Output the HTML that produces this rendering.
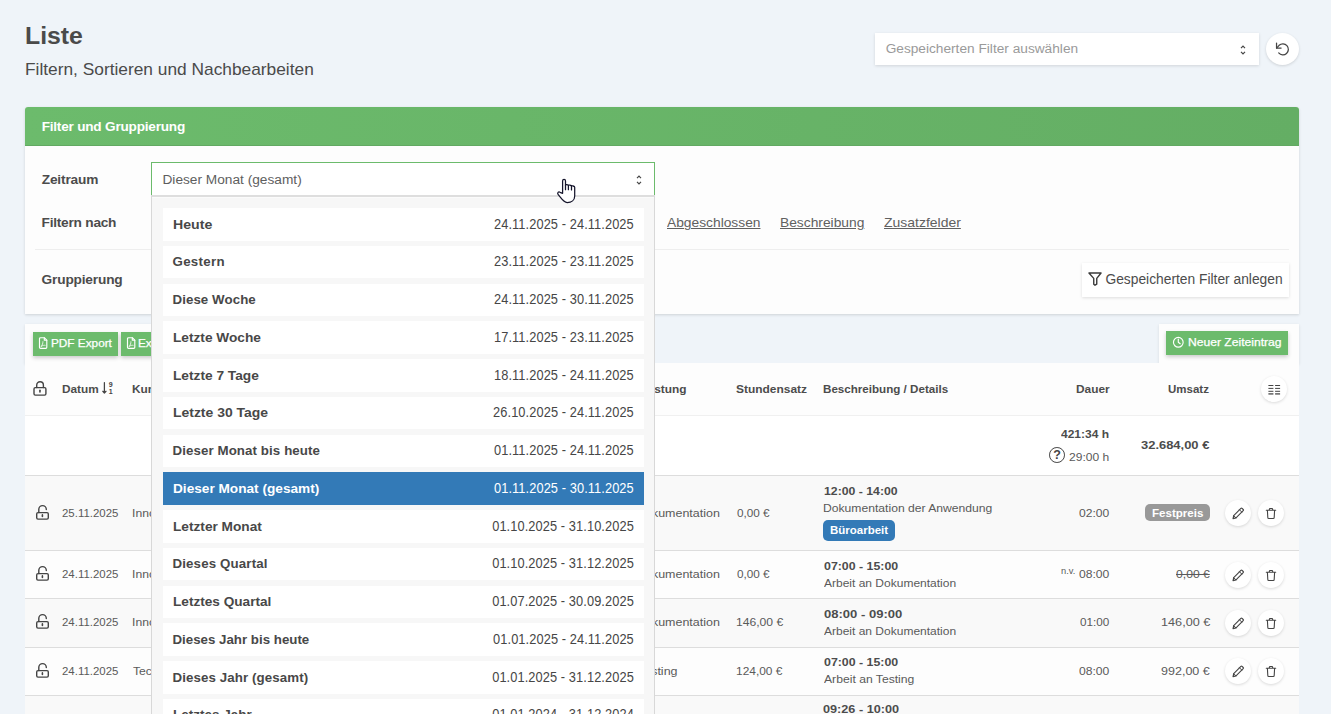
<!DOCTYPE html>
<html lang="de">
<head>
<meta charset="utf-8">
<title>Liste – Filtern, Sortieren und Nachbearbeiten</title>
<style>
*{box-sizing:border-box}
html,body{margin:0;padding:0}
body{width:1331px;height:714px;overflow:hidden;background:#eff4f9;color:#4a4a4a;
  font-family:"Liberation Sans",sans-serif;font-size:13px;position:relative}
div,section,header,h1,p,a,span,b{position:absolute;margin:0}
.t{line-height:16px;white-space:nowrap;font-weight:normal;transform-origin:0 50%}
.ic{position:absolute;display:block;overflow:visible}
.sh{background:#fff;box-shadow:0 1px 3px rgba(0,0,0,.13)}
.round{border-radius:50%;background:#fff;box-shadow:0 1px 3px rgba(0,0,0,.14)}
.card{background:#fdfdfd;border-radius:3px 3px 0 0;box-shadow:0 1px 3px rgba(0,0,0,.14)}
.card-h{left:0;top:0;width:100%;height:39px;border-radius:3px 3px 0 0;background:linear-gradient(90deg,#6cbb6c 0%,#64ae64 100%);
  border-bottom:1px solid #62a962}
.sel{border:1px solid #6cbb6c;border-bottom:0;background:#fff}
.sep{height:1px;background:#eee}
.tb{background:#fdfdfd;box-shadow:0 1px 3px rgba(0,0,0,.1)}
.btn-g{background:#6cbb6c;box-shadow:0 2px 4px rgba(0,0,0,.2)}
.tbl{background:#fdfdfd}
.row{left:0;width:1274px;border-bottom:1px solid #ddd}
.row.hd{border-bottom-color:#f0f0f0}
.row.alt{background:#f9f9f9}
.row.wh{background:#fff}
.badge{border-radius:5px}
.btn-g .t{-webkit-text-stroke:.250px #fff}
.q{border:1.600px solid #444;border-radius:50%;text-align:center;font-weight:bold;color:#444;font-size:12.500px;line-height:14.200px}
.dd{background:#f7f7f7;border:1px solid #d8d8d8;border-top:2px solid #dedede;box-shadow:inset 0 1px 0 #fbfbfb}
.it{left:11px;width:481px;background:#fff;color:#464646}
.it .d{right:9.800px;font-size:14px;line-height:16px;letter-spacing:.1px;transform:scaleX(.915);transform-origin:100% 50%;white-space:nowrap}
.it.on{background:#337ab7;color:#fff}
</style>
</head>
<body>
<header style="left:0;top:0;width:1331px;height:100px">
  <h1 class="t" style="left:24.84px;top:28.4px;font-size:24.2px;font-weight:bold;color:#4a4a4a;transform:scaleX(1.026)">Liste</h1>
  <p class="t" style="left:24.63px;top:61px;font-size:16.1px;color:#4a4a4a;transform:scaleX(1.076)">Filtern, Sortieren und Nachbearbeiten</p>
  <div class="sh" style="left:875px;top:33px;width:384px;height:32px">
    <span class="t" style="left:10.64px;top:8.4px;font-size:13.7px;color:#9a9a9a">Gespeicherten Filter auswählen</span>
    <svg class="ic" style="left:363.5px;top:10.5px" width="8" height="12" viewBox="0 0 8 12" fill="none" stroke="#444" stroke-width="1.200"><path d="M2 4.100 4 2.100l2 2M2 7.900 4 9.900l2-2"/></svg>
  </div>
  <div class="round" style="left:1266px;top:33px;width:33px;height:32px"><svg class="ic" style="left:7.7px;top:7.2px" width="18" height="18" viewBox="-9 -9 18 18" fill="none" stroke="#444" stroke-width="1.250" stroke-linecap="round" stroke-linejoin="round"><path d="M-1.900-.900H-6.450V-5.900"/><path d="M-6.450-.900-3.900-3.700A5.500 5.500 0 1 1-4.300 3.900"/></svg></div>
</header>

<section class="card" style="left:25px;top:107px;width:1274px;height:207px">
  <div class="card-h"><span class="t" style="left:16.65px;top:11.7px;font-size:13.6px;font-weight:bold;color:#fff;letter-spacing:-0.21px">Filter und Gruppierung</span></div>
  <span class="t" style="left:16.68px;top:65px;font-size:13.7px;font-weight:bold;color:#4c4c4c;letter-spacing:-0.15px">Zeitraum</span>
  <span class="t" style="left:16.55px;top:108px;font-size:13.7px;font-weight:bold;color:#4c4c4c;letter-spacing:-0.24px">Filtern nach</span>
  <span class="t" style="left:16.6px;top:165px;font-size:13.7px;font-weight:bold;color:#4c4c4c;letter-spacing:-0.18px">Gruppierung</span>
  <div class="sel" style="left:126px;top:55px;width:504px;height:34px"><span class="t" style="left:10.49px;top:9.4px;font-size:13.7px;color:#5e5e5e">Dieser Monat (gesamt)</span><svg class="ic" style="left:482.5px;top:10.6px" width="8" height="12" viewBox="0 0 8 12" fill="none" stroke="#444" stroke-width="1.200"><path d="M2 4.100 4 2.100l2 2M2 7.900 4 9.900l2-2"/></svg></div>
  <a class="t" style="left:641.83px;top:108.2px;font-size:13.2px;color:#606060;transform:scaleX(1.045);text-decoration:underline">Abgeschlossen</a>
  <a class="t" style="left:754.86px;top:108.2px;font-size:13.2px;color:#606060;transform:scaleX(1.046);text-decoration:underline">Beschreibung</a>
  <a class="t" style="left:858.75px;top:108.2px;font-size:13.2px;color:#606060;transform:scaleX(1.059);text-decoration:underline">Zusatzfelder</a>
  <div class="sep" style="left:10px;top:142px;width:1254px"></div>
  <div class="sh" style="left:1057px;top:156px;width:207px;height:34px"><svg class="ic" style="left:5px;top:8px" width="16" height="16" viewBox="0 0 16 16" fill="none" stroke="#3a3a3a" stroke-width="1.400" stroke-linejoin="round"><path d="M1.950 2H14.050L9.750 7.400V13.200L8 14.200 6.750 13.200V7.400Z"/></svg><span class="t" style="left:23.45px;top:9px;font-size:13.8px;color:#4c4c4c">Gespeicherten Filter anlegen</span></div>
</section>

<div class="tb" style="left:25px;top:323.5px;width:420px;height:40px">
  <div class="btn-g" style="left:8px;top:8.5px;width:85px;height:24px"><svg class="ic" style="left:5px;top:4px" width="10" height="14" viewBox="0 0 10 14" fill="none" stroke="#fff" stroke-width="1.150" stroke-linecap="round" stroke-linejoin="round"><path d="M1.500 2.700a1 1 0 0 1 1-1H6.300L8.800 4.200V11.350a1 1 0 0 1-1 1H2.500a1 1 0 0 1-1-1Z"/><path d="M6.300 1.700V4.200H8.800"/><path d="M3.300 10.300C4.500 8.800 4.900 7.300 4.900 5.700M3.300 10.300C4.800 9.300 6 9.100 7.100 9.300" stroke-width=".8"/></svg><span class="t" style="left:17.99px;top:3px;font-size:11.1px;color:#fff;transform:scaleX(1.062)">PDF Export</span></div>
  <div class="btn-g" style="left:96px;top:8.5px;width:92px;height:24px"><svg class="ic" style="left:5px;top:4px" width="10" height="14" viewBox="0 0 10 14" fill="none" stroke="#fff" stroke-width="1.150" stroke-linecap="round" stroke-linejoin="round"><path d="M1.500 2.700a1 1 0 0 1 1-1H6.300L8.800 4.200V11.350a1 1 0 0 1-1 1H2.500a1 1 0 0 1-1-1Z"/><path d="M6.300 1.700V4.200H8.800"/><path d="M3.300 10.300C4.500 8.800 4.900 7.300 4.900 5.700M3.300 10.300C4.800 9.300 6 9.100 7.100 9.300" stroke-width=".8"/></svg><span class="t" style="left:17.19px;top:3px;font-size:11.1px;color:#fff;transform:scaleX(1.06)">Excel Export</span></div>
</div>
<div class="tb" style="left:1159px;top:323.5px;width:140px;height:40px">
  <div class="btn-g" style="left:7px;top:7.5px;width:122px;height:24px"><svg class="ic" style="left:6px;top:4.5px" width="12.6" height="12.6" viewBox="0 0 12.6 12.6" fill="none" stroke="#fff" stroke-width="1.150" stroke-linecap="round" stroke-linejoin="round"><circle cx="6.300" cy="6.300" r="4.850"/><path d="M6.300 3.100V6.300L8.200 7.700"/></svg><span class="t" style="left:21.55px;top:3px;font-size:11.1px;color:#fff;transform:scaleX(1.091)">Neuer Zeiteintrag</span></div>
</div>

<div class="tbl" style="left:25px;top:363px;width:1274px;height:351px">
  <div class="row hd" style="top:0;height:53px">
    <svg class="ic" style="left:7px;top:17px" width="16" height="17" viewBox="0 0 16 17" fill="none" stroke="#444" stroke-width="1.400" stroke-linecap="round" stroke-linejoin="round"><rect x="2" y="7.600" width="11.900" height="7.500" rx="1.300"/><path d="M4.700 7.600V5.150a3.350 3.350 0 0 1 6.700 0V7.600"/><path d="M7.950 10.300V12" stroke-width="1.600"/></svg>
    <span class="t" style="left:36.51px;top:18.2px;font-size:11px;font-weight:bold;color:#4c4c4c;transform:scaleX(1.073)">Datum</span><svg class="ic" style="left:75px;top:17px" width="14" height="16" viewBox="0 0 14 16" fill="none" stroke="#444" stroke-linecap="round" stroke-linejoin="round"><path d="M4.400 2.600V13M2.800 11.300 4.400 13 6 11.300" stroke-width="1.250"/><text x="8.800" y="7.300" font-family="Liberation Sans, sans-serif" font-size="7" font-weight="bold" fill="#444" stroke="none">9</text><text x="8.800" y="13.600" font-family="Liberation Sans, sans-serif" font-size="7" font-weight="bold" fill="#444" stroke="none">1</text></svg>
    <span class="t" style="left:106.61px;top:18.2px;font-size:11px;font-weight:bold;color:#4c4c4c;transform:scaleX(1.08)">Kunde</span>
    <span class="t" style="left:333.91px;top:18.2px;font-size:11px;font-weight:bold;color:#4c4c4c;transform:scaleX(1.08)">Projekt</span>
    <span class="t" style="left:612.45px;top:18.2px;font-size:11px;font-weight:bold;color:#4c4c4c;transform:scaleX(1.08)">Leistung</span>
    <span class="t" style="left:711.01px;top:18.2px;font-size:11px;font-weight:bold;color:#4c4c4c;transform:scaleX(1.086)">Stundensatz</span>
    <span class="t" style="left:798.03px;top:18.2px;font-size:11px;font-weight:bold;color:#4c4c4c;transform:scaleX(1.055)">Beschreibung / Details</span>
    <span class="t" style="left:1051.11px;top:18.2px;font-size:11px;font-weight:bold;color:#4c4c4c;transform:scaleX(1.079)">Dauer</span>
    <span class="t" style="left:1142.84px;top:18.2px;font-size:11px;font-weight:bold;color:#4c4c4c;transform:scaleX(1.046)">Umsatz</span>
    <div class="round" style="left:1235.8px;top:13px;width:26.2px;height:26.2px"><svg class="ic" style="left:4.1px;top:4.1px" width="18" height="18" viewBox="-9 -9 18 18" fill="none" stroke="#444"><path d="M-5.600-3.500h5M1.100-3.500h5M-5.600-.600h5M1.100-.600h5M-5.600 2.300h5M1.100 2.300h5" stroke-width="1" stroke-linecap="butt"/><path d="M-5.600 4.900h5M1.100 4.900h5" stroke-width="1.700" stroke="#777" stroke-linecap="butt"/></svg></div>
  </div>
  <div class="row wh" style="top:53px;height:60px">
    <span class="t" style="left:1036.26px;top:10.7px;font-size:10.4px;font-weight:bold;color:#4c4c4c;transform:scaleX(1.157)">421:34 h</span>
    <div class="q" style="left:1024.2px;top:31.1px;width:15.8px;height:15.8px">?</div><span class="t" style="left:1043.57px;top:34px;font-size:10.4px;color:#5a5a5a;transform:scaleX(1.16)">29:00 h</span>
    <span class="t" style="left:1116.15px;top:22px;font-size:10.4px;font-weight:bold;color:#4c4c4c;transform:scaleX(1.245)">32.684,00 €</span>
  </div>
  <div class="row alt" style="top:113px;height:75px">
    <svg class="ic" style="left:10px;top:27.2px" width="15" height="17" viewBox="0 0 15 17" fill="none" stroke="#444" stroke-width="1.400" stroke-linecap="round" stroke-linejoin="round"><rect x="1.700" y="9.600" width="11.600" height="6.500" rx="1.300"/><path d="M3.800 9.600V6.350a3.750 3.750 0 0 1 7.500 0V6.500"/><path d="M7.400 11.900V13.500" stroke-width="1.600"/></svg>
    <span class="t" style="left:36.78px;top:30px;font-size:10.4px;color:#5a5a5a;transform:scaleX(1.1)">25.11.2025</span>
    <span class="t" style="left:107.06px;top:30px;font-size:10.4px;color:#5a5a5a;transform:scaleX(1.17)">Innovative Solutions GmbH</span>
    <span class="t" style="left:333.77px;top:30px;font-size:10.4px;color:#5a5a5a;transform:scaleX(1.17)">Kundenportal Relaunch</span>
    <span class="t" style="left:611.19px;top:30px;font-size:10.4px;color:#5a5a5a;transform:scaleX(1.2)">Dokumentation</span>
    <span class="t" style="left:711.71px;top:30px;font-size:10.4px;color:#5a5a5a;transform:scaleX(1.13)">0,00 €</span>
    <span class="t" style="left:798.81px;top:8.2px;font-size:10.4px;font-weight:bold;color:#4c4c4c;transform:scaleX(1.18)">12:00 - 14:00</span>
    <span class="t" style="left:797.56px;top:25px;font-size:10.4px;color:#5a5a5a;transform:scaleX(1.168)">Dokumentation der Anwendung</span>
    <span class="badge" style="left:798.1px;top:44px;width:71.9px;height:21.1px;background:#337ab7"><span class="t" style="left:6.86px;top:1.6px;font-size:11.2px;font-weight:bold;color:#fff;transform:scaleX(1.026)">Büroarbeit</span></span>
    <span class="t" style="left:1053.51px;top:30px;font-size:10.4px;color:#5a5a5a;transform:scaleX(1.163)">02:00</span>
    <span class="badge" style="left:1120.2px;top:28px;width:64.9px;height:17px;background:#999"><span class="t" style="left:6.65px;top:1.3px;font-size:11.2px;font-weight:bold;color:#fff;transform:scaleX(1.034)">Festpreis</span></span>
    <div class="round" style="left:1200px;top:24.1px;width:26px;height:26px"><svg class="ic" style="left:4px;top:4px" width="18" height="18" viewBox="-9 -9 18 18" fill="none" stroke="#444" stroke-width="1.100" stroke-linecap="round" stroke-linejoin="round"><path d="M-5 5.600l.700-3L2.900-4.600q.600-.600 1.200 0L5.200-3.500q.600.600 0 1.200L-2 4.900Z"/><path d="M1.500-3.200 3.800-.900M-4.300 2.600-2 4.900" stroke-width="1"/></svg></div>
    <div class="round" style="left:1233px;top:24.1px;width:26px;height:26px"><svg class="ic" style="left:4px;top:4px" width="18" height="18" viewBox="-9 -9 18 18" fill="none" stroke="#444" stroke-width="1.100" stroke-linecap="round" stroke-linejoin="round"><path d="M-4.700-2.700H4.700M-1.700-2.700V-3.600a.900.900 0 0 1 .900-.900h1.600a.900.900 0 0 1 .900.900V-2.700M-3.600-2.700l.400 7.200a1 1 0 0 0 1 1h4.400a1 1 0 0 0 1-1l.400-7.200"/></svg></div>
  </div>
  <div class="row " style="top:188px;height:48px">
    <svg class="ic" style="left:10px;top:13px" width="15" height="17" viewBox="0 0 15 17" fill="none" stroke="#444" stroke-width="1.400" stroke-linecap="round" stroke-linejoin="round"><rect x="1.700" y="9.600" width="11.600" height="6.500" rx="1.300"/><path d="M3.800 9.600V6.350a3.750 3.750 0 0 1 7.500 0V6.500"/><path d="M7.400 11.900V13.500" stroke-width="1.600"/></svg>
    <span class="t" style="left:36.78px;top:15.8px;font-size:10.4px;color:#5a5a5a;transform:scaleX(1.1)">24.11.2025</span>
    <span class="t" style="left:107.06px;top:15.8px;font-size:10.4px;color:#5a5a5a;transform:scaleX(1.17)">Innovative Solutions GmbH</span>
    <span class="t" style="left:333.77px;top:15.8px;font-size:10.4px;color:#5a5a5a;transform:scaleX(1.17)">Kundenportal Relaunch</span>
    <span class="t" style="left:611.19px;top:15.8px;font-size:10.4px;color:#5a5a5a;transform:scaleX(1.2)">Dokumentation</span>
    <span class="t" style="left:711.71px;top:15.8px;font-size:10.4px;color:#5a5a5a;transform:scaleX(1.13)">0,00 €</span>
    <span class="t" style="left:799.02px;top:8.1px;font-size:10.4px;font-weight:bold;color:#4c4c4c;transform:scaleX(1.19)">07:00 - 15:00</span>
    <span class="t" style="left:798.61px;top:24.8px;font-size:10.4px;color:#5a5a5a;transform:scaleX(1.155)">Arbeit an Dokumentation</span>
    <span class="t" style="left:1035.72px;top:11.9px;font-size:9px;color:#5a5a5a;transform:scaleX(1.03)">n.v.</span>
    <span class="t" style="left:1054.1px;top:15.8px;font-size:10.4px;color:#5a5a5a;transform:scaleX(1.167)">08:00</span>
    <span class="t" style="left:1150.9px;top:15.8px;font-size:10.4px;color:#5a5a5a;transform:scaleX(1.169);text-decoration:line-through">0,00 €</span>
    <div class="round" style="left:1200px;top:10.85px;width:26px;height:26px"><svg class="ic" style="left:4px;top:4px" width="18" height="18" viewBox="-9 -9 18 18" fill="none" stroke="#444" stroke-width="1.100" stroke-linecap="round" stroke-linejoin="round"><path d="M-5 5.600l.700-3L2.900-4.600q.600-.600 1.200 0L5.200-3.500q.600.600 0 1.200L-2 4.900Z"/><path d="M1.500-3.200 3.800-.900M-4.300 2.600-2 4.900" stroke-width="1"/></svg></div>
    <div class="round" style="left:1233px;top:10.85px;width:26px;height:26px"><svg class="ic" style="left:4px;top:4px" width="18" height="18" viewBox="-9 -9 18 18" fill="none" stroke="#444" stroke-width="1.100" stroke-linecap="round" stroke-linejoin="round"><path d="M-4.700-2.700H4.700M-1.700-2.700V-3.600a.900.900 0 0 1 .900-.900h1.600a.900.900 0 0 1 .900.900V-2.700M-3.600-2.700l.400 7.200a1 1 0 0 0 1 1h4.400a1 1 0 0 0 1-1l.400-7.200"/></svg></div>
  </div>
  <div class="row alt" style="top:236px;height:49px">
    <svg class="ic" style="left:10px;top:13.2px" width="15" height="17" viewBox="0 0 15 17" fill="none" stroke="#444" stroke-width="1.400" stroke-linecap="round" stroke-linejoin="round"><rect x="1.700" y="9.600" width="11.600" height="6.500" rx="1.300"/><path d="M3.800 9.600V6.350a3.750 3.750 0 0 1 7.500 0V6.500"/><path d="M7.400 11.900V13.500" stroke-width="1.600"/></svg>
    <span class="t" style="left:36.78px;top:16px;font-size:10.4px;color:#5a5a5a;transform:scaleX(1.1)">24.11.2025</span>
    <span class="t" style="left:107.06px;top:16px;font-size:10.4px;color:#5a5a5a;transform:scaleX(1.17)">Innovative Solutions GmbH</span>
    <span class="t" style="left:333.77px;top:16px;font-size:10.4px;color:#5a5a5a;transform:scaleX(1.17)">Kundenportal Relaunch</span>
    <span class="t" style="left:611.19px;top:16px;font-size:10.4px;color:#5a5a5a;transform:scaleX(1.2)">Dokumentation</span>
    <span class="t" style="left:710.67px;top:16px;font-size:10.4px;color:#5a5a5a;transform:scaleX(1.168)">146,00 €</span>
    <span class="t" style="left:799px;top:7.9px;font-size:10.4px;font-weight:bold;color:#4c4c4c;transform:scaleX(1.255)">08:00 - 09:00</span>
    <span class="t" style="left:798.61px;top:24.9px;font-size:10.4px;color:#5a5a5a;transform:scaleX(1.155)">Arbeit an Dokumentation</span>
    <span class="t" style="left:1055.21px;top:16px;font-size:10.4px;color:#5a5a5a;transform:scaleX(1.127)">01:00</span>
    <span class="t" style="left:1135.91px;top:16px;font-size:10.4px;color:#5a5a5a;transform:scaleX(1.221)">146,00 €</span>
    <div class="round" style="left:1200px;top:10.9px;width:26px;height:26px"><svg class="ic" style="left:4px;top:4px" width="18" height="18" viewBox="-9 -9 18 18" fill="none" stroke="#444" stroke-width="1.100" stroke-linecap="round" stroke-linejoin="round"><path d="M-5 5.600l.700-3L2.900-4.600q.600-.600 1.200 0L5.200-3.500q.600.600 0 1.200L-2 4.900Z"/><path d="M1.500-3.200 3.800-.900M-4.300 2.600-2 4.900" stroke-width="1"/></svg></div>
    <div class="round" style="left:1233px;top:10.9px;width:26px;height:26px"><svg class="ic" style="left:4px;top:4px" width="18" height="18" viewBox="-9 -9 18 18" fill="none" stroke="#444" stroke-width="1.100" stroke-linecap="round" stroke-linejoin="round"><path d="M-4.700-2.700H4.700M-1.700-2.700V-3.600a.900.900 0 0 1 .900-.900h1.600a.900.900 0 0 1 .900.900V-2.700M-3.600-2.700l.400 7.200a1 1 0 0 0 1 1h4.400a1 1 0 0 0 1-1l.400-7.200"/></svg></div>
  </div>
  <div class="row " style="top:285px;height:48px">
    <svg class="ic" style="left:10px;top:12.9px" width="15" height="17" viewBox="0 0 15 17" fill="none" stroke="#444" stroke-width="1.400" stroke-linecap="round" stroke-linejoin="round"><rect x="1.700" y="9.600" width="11.600" height="6.500" rx="1.300"/><path d="M3.800 9.600V6.350a3.750 3.750 0 0 1 7.500 0V6.500"/><path d="M7.400 11.900V13.500" stroke-width="1.600"/></svg>
    <span class="t" style="left:36.78px;top:15.7px;font-size:10.4px;color:#5a5a5a;transform:scaleX(1.1)">24.11.2025</span>
    <span class="t" style="left:108.13px;top:15.7px;font-size:10.4px;color:#5a5a5a;transform:scaleX(1.17)">TechStart AG</span>
    <span class="t" style="left:333.76px;top:15.7px;font-size:10.4px;color:#5a5a5a;transform:scaleX(1.17)">Mobile App</span>
    <span class="t" style="left:612.85px;top:15.7px;font-size:10.4px;color:#5a5a5a;transform:scaleX(1.2)">Testing</span>
    <span class="t" style="left:710.7px;top:15.7px;font-size:10.4px;color:#5a5a5a;transform:scaleX(1.147)">124,00 €</span>
    <span class="t" style="left:799.02px;top:7px;font-size:10.4px;font-weight:bold;color:#4c4c4c;transform:scaleX(1.19)">07:00 - 15:00</span>
    <span class="t" style="left:798.61px;top:23.8px;font-size:10.4px;color:#5a5a5a;transform:scaleX(1.17)">Arbeit an Testing</span>
    <span class="t" style="left:1054.1px;top:15.7px;font-size:10.4px;color:#5a5a5a;transform:scaleX(1.167)">08:00</span>
    <span class="t" style="left:1135.75px;top:15.7px;font-size:10.4px;color:#5a5a5a;transform:scaleX(1.206)">992,00 €</span>
    <div class="round" style="left:1200px;top:10.1px;width:26px;height:26px"><svg class="ic" style="left:4px;top:4px" width="18" height="18" viewBox="-9 -9 18 18" fill="none" stroke="#444" stroke-width="1.100" stroke-linecap="round" stroke-linejoin="round"><path d="M-5 5.600l.700-3L2.900-4.600q.600-.600 1.200 0L5.200-3.500q.600.600 0 1.200L-2 4.900Z"/><path d="M1.500-3.200 3.800-.900M-4.300 2.600-2 4.900" stroke-width="1"/></svg></div>
    <div class="round" style="left:1233px;top:10.1px;width:26px;height:26px"><svg class="ic" style="left:4px;top:4px" width="18" height="18" viewBox="-9 -9 18 18" fill="none" stroke="#444" stroke-width="1.100" stroke-linecap="round" stroke-linejoin="round"><path d="M-4.700-2.700H4.700M-1.700-2.700V-3.600a.900.900 0 0 1 .900-.900h1.600a.900.900 0 0 1 .900.900V-2.700M-3.600-2.700l.400 7.200a1 1 0 0 0 1 1h4.400a1 1 0 0 0 1-1l.400-7.200"/></svg></div>
  </div>
  <div class="row alt" style="top:333px;height:75px">
    <span class="t" style="left:798.11px;top:6.1px;font-size:10.4px;font-weight:bold;color:#4c4c4c;transform:scaleX(1.219)">09:26 - 10:00</span>
  </div>
</div>

<div class="dd" style="left:151px;top:195px;width:504px;height:530px">
  <div class="it" style="top:11px;height:33px"><b class="t" style="left:9.5px;top:9px;font-size:13.3px;font-weight:bold;color:#484848;transform:scaleX(1.062)">Heute</b><span class="d" style="top:8px">24.11.2025 - 24.11.2025</span></div>
  <div class="it" style="top:49px;height:32px"><b class="t" style="left:9.5px;top:8px;font-size:13.3px;font-weight:bold;color:#484848;letter-spacing:0.31px">Gestern</b><span class="d" style="top:7px">23.11.2025 - 23.11.2025</span></div>
  <div class="it" style="top:87px;height:32px"><b class="t" style="left:9.5px;top:8px;font-size:13.3px;font-weight:bold;color:#484848;letter-spacing:0.07px">Diese Woche</b><span class="d" style="top:7px">24.11.2025 - 30.11.2025</span></div>
  <div class="it" style="top:124px;height:33px"><b class="t" style="left:9.5px;top:9px;font-size:13.3px;font-weight:bold;color:#484848;transform:scaleX(1.029)">Letzte Woche</b><span class="d" style="top:8px">17.11.2025 - 23.11.2025</span></div>
  <div class="it" style="top:162px;height:33px"><b class="t" style="left:9.5px;top:9px;font-size:13.3px;font-weight:bold;color:#484848;transform:scaleX(1.031)">Letzte 7 Tage</b><span class="d" style="top:8px">18.11.2025 - 24.11.2025</span></div>
  <div class="it" style="top:200px;height:32px"><b class="t" style="left:9.5px;top:8px;font-size:13.3px;font-weight:bold;color:#484848;transform:scaleX(1.048)">Letzte 30 Tage</b><span class="d" style="top:7px">26.10.2025 - 24.11.2025</span></div>
  <div class="it" style="top:238px;height:32px"><b class="t" style="left:9.5px;top:8px;font-size:13.3px;font-weight:bold;color:#484848;letter-spacing:0.09px">Dieser Monat bis heute</b><span class="d" style="top:7px">01.11.2025 - 24.11.2025</span></div>
  <div class="it on" style="top:275px;height:33px"><b class="t" style="left:9.5px;top:9px;font-size:13.3px;font-weight:bold;color:#fff;transform:scaleX(1.026)">Dieser Monat (gesamt)</b><span class="d" style="top:8px">01.11.2025 - 30.11.2025</span></div>
  <div class="it" style="top:313px;height:33px"><b class="t" style="left:9.5px;top:9px;font-size:13.3px;font-weight:bold;color:#484848;transform:scaleX(1.028)">Letzter Monat</b><span class="d" style="top:8px">01.10.2025 - 31.10.2025</span></div>
  <div class="it" style="top:351px;height:32px"><b class="t" style="left:9.5px;top:8px;font-size:13.3px;font-weight:bold;color:#484848;letter-spacing:0.14px">Dieses Quartal</b><span class="d" style="top:7px">01.10.2025 - 31.12.2025</span></div>
  <div class="it" style="top:389px;height:32px"><b class="t" style="left:9.5px;top:8px;font-size:13.3px;font-weight:bold;color:#484848;transform:scaleX(1.024)">Letztes Quartal</b><span class="d" style="top:7px">01.07.2025 - 30.09.2025</span></div>
  <div class="it" style="top:426px;height:33px"><b class="t" style="left:9.5px;top:9px;font-size:13.3px;font-weight:bold;color:#484848">Dieses Jahr bis heute</b><span class="d" style="top:8px">01.01.2025 - 24.11.2025</span></div>
  <div class="it" style="top:464px;height:33px"><b class="t" style="left:9.5px;top:9px;font-size:13.3px;font-weight:bold;color:#484848;letter-spacing:0.1px">Dieses Jahr (gesamt)</b><span class="d" style="top:8px">01.01.2025 - 31.12.2025</span></div>
  <div class="it" style="top:502px;height:32px"><b class="t" style="left:9.5px;top:8px;font-size:13.3px;font-weight:bold;color:#484848;transform:scaleX(1.016)">Letztes Jahr</b><span class="d" style="top:7px">01.01.2024 - 31.12.2024</span></div>
</div>

<svg class="ic" style="left:545px;top:170px" width="50" height="36" viewBox="0 0 50 36" fill="none" stroke="#15152b" stroke-width="1.250" stroke-linecap="round" stroke-linejoin="round"><path d="M17.600 23.300V10.900a1.450 1.450 0 0 1 2.900 0V15.200c0-.900 2.900-.900 2.900.400 0-.800 3.100-.800 3.100.600 0-.700 3.200-.600 3.200 1V26C29.700 30 26.500 32.500 22.200 32.500 18.500 32.500 16.500 28.500 13.200 24.600c-1.300-1.600.300-3.400 1.900-2.300Z" fill="#fff"/><path d="M20.500 15V19.700M23.400 15.600V19.700M26.500 16.200V19.900"/></svg>
</body>
</html>
